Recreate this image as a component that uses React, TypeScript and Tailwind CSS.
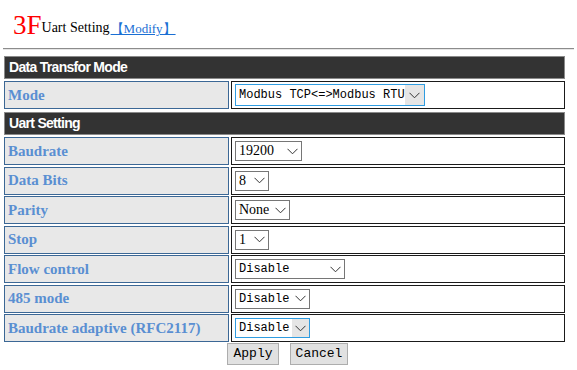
import React from "react";

const serif = { fontFamily: '"Liberation Serif", "Times New Roman", serif' };
const mono = { fontFamily: '"Liberation Mono", "Courier New", monospace' };
const sans = { fontFamily: '"Liberation Sans", Arial, sans-serif' };

function Chevron() {
  return (
    <svg width="11" height="7" viewBox="0 0 11 7" className="shrink-0">
      <path d="M0.5 0.8 L5.5 5.8 L10.5 0.8" fill="none" stroke="#333" strokeWidth="1" />
    </svg>
  );
}

type SelProps = {
  value: string;
  width: number;
  mono?: boolean;
  focus?: boolean;
  hover?: boolean;
};

function FakeSelect({ value, width, mono: isMono, focus, hover }: SelProps) {
  return (
    <div
      className={`flex h-[20px] items-center justify-between border bg-white pl-[3px] ${
        focus ? "border-[#2f9ce0]" : "border-[#767676]"
      }`}
      style={{ width }}
    >
      <span
        className={`whitespace-pre leading-none text-black ${isMono ? "text-[12px]" : "text-[14px]"}`}
        style={isMono ? mono : serif}
      >
        {value}
      </span>
      <span
        className={`flex h-full items-center px-[3px] ${hover ? "bg-[#e5e5e5]" : ""}`}
      >
        <Chevron />
      </span>
    </div>
  );
}

function Header({ title }: { title: string }) {
  return (
    <div
      className="flex h-[23px] items-center border border-[#8a8a8a] bg-[#333333] pl-[4px] text-[14px] font-bold tracking-[-0.7px] text-white"
      style={sans}
    >
      {title}
    </div>
  );
}

function Row({ label, children, h = 28 }: { label: string; children: React.ReactNode; h?: number }) {
  return (
    <div className="flex gap-[2px]" style={{ height: h }}>
      <div
        className="flex w-[225px] items-center border border-[#3b6795] bg-[#e8e8e8] pl-[3px] text-[15px] font-bold text-[#5a8fd2]"
        style={serif}
      >
        {label}
      </div>
      <div className="flex flex-1 items-center border border-[#1a1a1a] bg-white pl-[3px]">
        {children}
      </div>
    </div>
  );
}

export default function App() {
  const rows: { label: string; sel: SelProps }[] = [
    { label: "Baudrate", sel: { value: "19200", width: 67 } },
    { label: "Data Bits", sel: { value: "8", width: 34 } },
    { label: "Parity", sel: { value: "None", width: 55 } },
    { label: "Stop", sel: { value: "1", width: 34 } },
    { label: "Flow control", sel: { value: "Disable", width: 110, mono: true } },
    { label: "485 mode", sel: { value: "Disable", width: 75, mono: true } },
    {
      label: "Baudrate adaptive (RFC2117)",
      sel: { value: "Disable", width: 75, mono: true, focus: true, hover: true },
    },
  ];

  return (
    <div className="h-[370px] w-[577px] overflow-hidden bg-white">
      {/* title */}
      <div className="flex h-[40px] items-end pl-[13px]" style={serif}>
        <span className="text-[27px] leading-[30px] text-[#ff0000]">3F</span>
        <span className="mb-[5px] text-[14px] leading-none text-black">Uart Setting</span>
        <a
          href="#"
          className="mb-[5px] ml-[1px] text-[13px] leading-none text-[#1a6fd4] underline"
        >
          【Modify】
        </a>
      </div>

      <div className="mx-[3px] mt-[8px] border-t border-b border-t-[#8c8c8c] border-b-[#e6e6e6]" />

      {/* settings table */}
      <div className="mt-[6px] flex w-[565px] flex-col gap-[2px] pl-[4px]">
        <Header title="Data Transfor Mode" />
        <Row label="Mode">
          <div className="flex h-[22px] w-[190px] items-center justify-between border border-[#2f9ce0] bg-white pl-[3px]">
            <span className="whitespace-pre text-[12px] leading-none text-black" style={mono}>
              Modbus TCP&lt;=&gt;Modbus RTU
            </span>
            <span className="flex h-full items-center bg-[#e5e5e5] px-[4px]">
              <Chevron />
            </span>
          </div>
        </Row>
        <div className="pt-[1px]">
          <Header title="Uart Setting" />
        </div>
        <div className="flex flex-col gap-[1.5px]">
          {rows.map((r) => (
            <Row key={r.label} label={r.label}>
              <FakeSelect {...r.sel} />
            </Row>
          ))}
        </div>
      </div>

      {/* buttons */}
      <div className="mt-[1px] flex justify-center gap-[11px] pr-[2px]">
        <button
          className="h-[22px] w-[52px] border border-[#adadad] bg-[#e1e1e1] text-[13px] text-black"
          style={mono}
        >
          Apply
        </button>
        <button
          className="h-[22px] w-[58px] border border-[#adadad] bg-[#e1e1e1] text-[13px] text-black"
          style={mono}
        >
          Cancel
        </button>
      </div>
    </div>
  );
}
